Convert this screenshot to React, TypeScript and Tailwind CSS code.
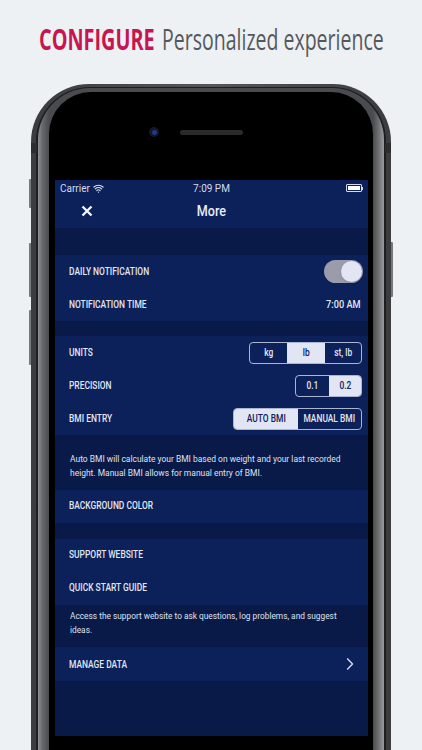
import { Wifi } from 'lucide-react';

const Row = ({ label, className = '', children }: { label: string; className?: string; children?: React.ReactNode }) => (
  <div className={`${className} flex items-center justify-between pl-[14px] pr-[6px]`}>
    <span className="inline-block origin-left scale-x-[0.78] translate-y-[1px] text-[10.8px] font-medium text-[#e3e7f2] whitespace-nowrap">{label}</span>
    {children}
  </div>
);

const Segments = ({ items, active, widths }: { items: string[]; active: number; widths: string[] }) => (
  <div className="flex h-[22px] rounded-[4px] border border-[#aab5d2] overflow-hidden">
    {items.map((item, i) => (
      <div
        key={item}
        className={`${widths[i]} flex items-center justify-center ${
          i === active ? 'bg-[#e2e6f4] text-[#0c2059]' : 'text-[#e3e7f2]'
        }`}
      >
        <span className="inline-block scale-x-[0.8] text-[10.5px] font-medium whitespace-nowrap">{item}</span>
      </div>
    ))}
  </div>
);

export default function App() {
  return (
    <div className="h-[750px] w-[422px] overflow-hidden bg-[#edf1f4] font-['Roboto',sans-serif]">
      {/* headline */}
      <div className="h-[84px] pt-[19px] flex justify-center">
        <div className="flex items-baseline gap-[8px] font-['Open_Sans',sans-serif] whitespace-nowrap">
          <span className="w-[115px] inline-block origin-left scale-x-[0.685] text-[29px] leading-[40px] font-bold text-[#c6164f]">CONFIGURE</span>
          <span className="w-[221px] inline-block origin-left scale-x-[0.673] text-[29px] leading-[40px] text-[#55585c]">Personalized experience</span>
        </div>
      </div>

      {/* phone shell */}
      <div className="relative mx-[31px] h-[666px]">
        {/* side buttons */}
        <div className="absolute left-[-2px] top-[95px] w-[2px] h-[29px] bg-[#77787a] rounded-l-[1px]" />
        <div className="absolute left-[-2px] top-[159px] w-[2px] h-[54px] bg-[#77787a] rounded-l-[1px]" />
        <div className="absolute left-[-2px] top-[226px] w-[2px] h-[55px] bg-[#77787a] rounded-l-[1px]" />
        <div className="absolute right-[-2px] top-[158px] w-[2px] h-[55px] bg-[#77787a] rounded-r-[1px]" />
        {/* antenna bands */}
        <div className="absolute left-0 top-[59px] w-[6px] h-[10px] bg-[#2c2d2f]" />
        <div className="absolute right-0 top-[59px] w-[6px] h-[10px] bg-[#2c2d2f]" />

        <div className="h-full rounded-t-[58px] bg-gradient-to-r from-[#3b3c3e] via-[#55565a] to-[#3b3c3e] pt-[3px] px-[5px]">
          <div className="h-full rounded-t-[54px] bg-[#1d1e20] pt-[1px] px-[2px]">
            <div className="h-full rounded-t-[52px] bg-[linear-gradient(to_right,#8f9092_0px,#6a6b6e_4px,#4a4b4e_11px,#4a4b4e_335px,#6a6b6e_340px,#9a9b9d_346px)] pt-[4px] px-[11px]">
              <div className="h-full rounded-t-[42px] bg-black flex flex-col">
                {/* camera and speaker */}
                <div className="h-[88px] relative flex justify-center">
                  <div className="absolute left-[100px] top-[35px] w-[10px] h-[10px] rounded-full bg-[#16182a] flex items-center justify-center">
                    <div className="w-[5px] h-[5px] rounded-full bg-[#1e3a8a]" />
                  </div>
                  <div className="mt-[38px] w-[63px] h-[5px] rounded-full bg-[#2b2b2b]" />
                </div>

                {/* screen */}
                <div className="mx-[6px] w-[313px] h-[556px] bg-[#0a1a48] flex flex-col">
                  <div className="h-[48px] bg-[#0c2059] shrink-0">
                    <div className="h-[16px] px-[5px] flex items-center justify-between text-[10px] text-[#d5dbea]">
                      <div className="flex items-center gap-[3px] w-[80px]">
                        <span>Carrier</span>
                        <Wifi size={11} strokeWidth={2.5} />
                      </div>
                      <span>7:09 PM</span>
                      <div className="w-[80px] flex justify-end items-center">
                        <div className="w-[16px] h-[8px] border border-[#d5dbea] rounded-[1px] p-[1px]">
                          <div className="h-full w-[12px] bg-white" />
                        </div>
                        <div className="w-[1px] h-[3px] bg-[#d5dbea]" />
                      </div>
                    </div>
                    <div className="h-[32px] relative flex items-center justify-center pb-[2px]">
                      <svg className="absolute left-[26px] top-[9px]" width="12" height="12" viewBox="0 0 12 12">
                        <path d="M1.5 1.5 L10.5 10.5 M10.5 1.5 L1.5 10.5" stroke="#f2f4fa" strokeWidth="2.4" />
                      </svg>
                      <span className="inline-block scale-x-[0.84] text-[15px] font-medium text-[#e8ebf4]">More</span>
                    </div>
                  </div>

                  <div className="h-[27px] shrink-0" />

                  <div className="bg-[#0c2059] shrink-0">
                    <Row label="DAILY NOTIFICATION" className="h-[33px]">
                      <div className="mr-[-1px] w-[39px] h-[23px] rounded-full bg-[#9a9cab] flex justify-end p-[1px]">
                        <div className="w-[21px] h-[21px] rounded-full bg-[#e2e6f4] shadow-sm" />
                      </div>
                    </Row>
                    <Row label="NOTIFICATION TIME" className="h-[33px]">
                      <span className="inline-block origin-right scale-x-[0.85] translate-y-[1px] text-[10.8px] font-medium text-[#e3e7f2] mr-[1px]">7:00 AM</span>
                    </Row>
                  </div>

                  <div className="h-[15px] shrink-0" />

                  <div className="bg-[#0c2059] shrink-0">
                    <Row label="UNITS" className="h-[33px]">
                      <Segments items={['kg', 'lb', 'st, lb']} active={1} widths={['w-[37px]', 'w-[38px]', 'w-[36px]']} />
                    </Row>
                    <Row label="PRECISION" className="h-[33px]">
                      <Segments items={['0.1', '0.2']} active={1} widths={['w-[33px]', 'w-[32px]']} />
                    </Row>
                    <Row label="BMI ENTRY" className="h-[33px]">
                      <Segments items={['AUTO BMI', 'MANUAL BMI']} active={0} widths={['w-[64px]', 'w-[63px]']} />
                    </Row>
                  </div>

                  <div className="h-[55px] pt-[17px] pl-[15px] shrink-0">
                    <div className="w-[310px] origin-left scale-x-[0.89] text-[9.5px] leading-[13.5px] text-[#dfe3ee]">
                      Auto BMI will calculate your BMI based on weight and your last recorded height. Manual BMI allows for manual entry of BMI.
                    </div>
                  </div>

                  <div className="bg-[#0c2059] shrink-0">
                    <Row label="BACKGROUND COLOR" className="h-[33px] pb-[2px]" />
                  </div>

                  <div className="h-[16px] shrink-0" />

                  <div className="bg-[#0c2059] shrink-0">
                    <Row label="SUPPORT WEBSITE" className="h-[33px] pb-[3px]" />
                    <Row label="QUICK START GUIDE" className="h-[33px] pb-[3px]" />
                  </div>

                  <div className="h-[42px] pt-[4px] pl-[15px] shrink-0">
                    <div className="w-[310px] origin-left scale-x-[0.875] text-[9.5px] leading-[13.5px] text-[#dfe3ee]">
                      Access the support website to ask questions, log problems, and suggest ideas.
                    </div>
                  </div>

                  <div className="bg-[#0c2059] shrink-0">
                    <Row label="MANAGE DATA" className="h-[34px]">
                      <svg className="mr-[8px]" width="8" height="14" viewBox="0 0 8 14" fill="none">
                        <path d="M1.2 1.5 L6.5 7 L1.2 12.5" stroke="#d8dded" strokeWidth="1.4" />
                      </svg>
                    </Row>
                  </div>
                </div>
              </div>
            </div>
          </div>
        </div>
      </div>
    </div>
  );
}
